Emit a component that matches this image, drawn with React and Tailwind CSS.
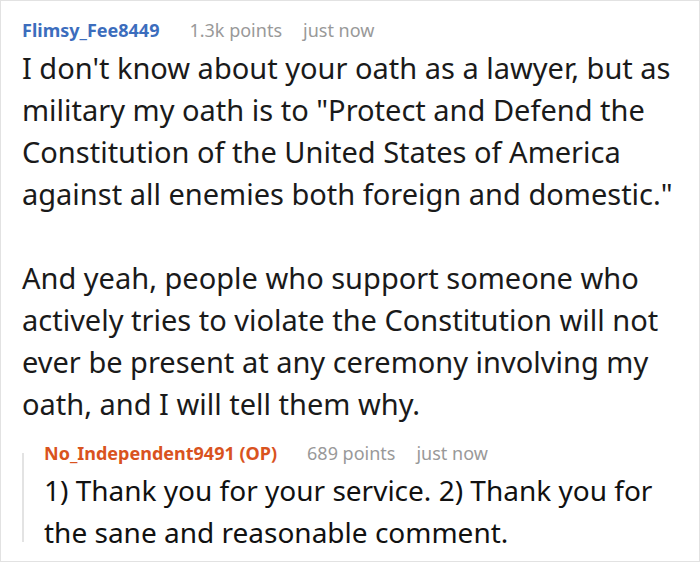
export default function App() {
  return (
    <div className="w-[700px] h-[562px] bg-white border border-[#e2e2e2] overflow-hidden font-['Noto_Sans',sans-serif]">
      <div className="pl-[21px] pt-[16px]">
        <div className="flex items-center text-[18px] leading-[26px]">
          <span className="font-bold text-[#3c6dbd]">Flimsy_Fee8449</span>
          <span className="ml-[30px] text-[#999]">1.3k points</span>
          <span className="ml-[21px] text-[#999]">just now</span>
        </div>
        <p className="mt-[4px] text-[29px] leading-[42px] text-[#1a1a1a] whitespace-nowrap">
          I don't know about your oath as a lawyer, but as<br />
          military my oath is to "Protect and Defend the<br />
          Constitution of the United States of America<br />
          against all enemies both foreign and domestic."
        </p>
        <p className="mt-[42px] text-[29px] leading-[42px] text-[#1a1a1a] whitespace-nowrap">
          And yeah, people who support someone who<br />
          actively tries to violate the Constitution will not<br />
          ever be present at any ceremony involving my<br />
          oath, and I will tell them why.
        </p>
        <div className="mt-[15px] flex">
          <div className="mt-[13px] mb-[11px] w-[2px] bg-[#e3e3e3]" />
          <div className="pl-[20px]">
            <div className="flex items-center text-[18px] leading-[26px]">
              <span className="font-bold text-[#d9531e]">No_Independent9491 (OP)</span>
              <span className="ml-[30px] text-[#999]">689 points</span>
              <span className="ml-[21px] text-[#999]">just now</span>
            </div>
            <p className="mt-[3px] text-[28px] leading-[42px] text-[#111] whitespace-nowrap">
              1) Thank you for your service. 2) Thank you for<br />
              the sane and reasonable comment.
            </p>
          </div>
        </div>
      </div>
    </div>
  )
}
